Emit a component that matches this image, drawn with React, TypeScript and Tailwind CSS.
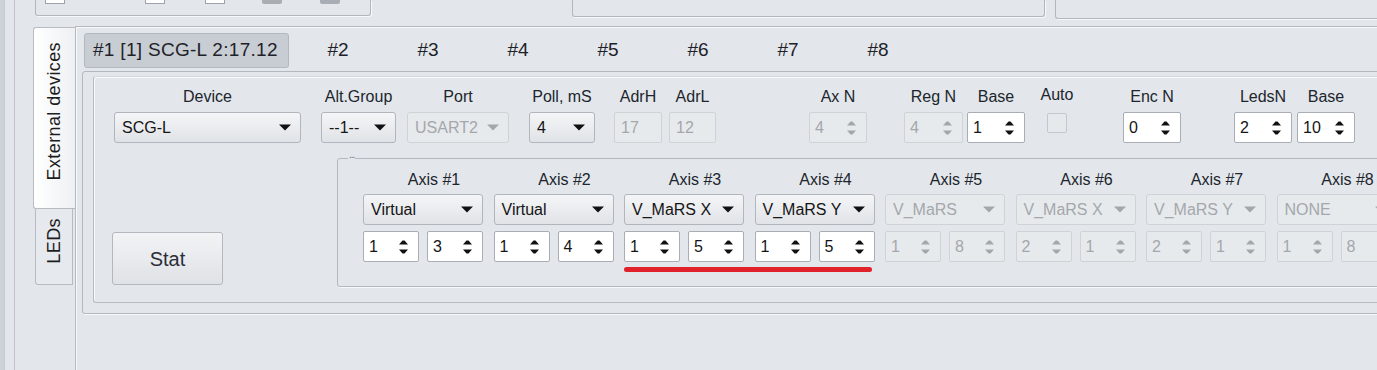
import React from 'react';

type Ctl = { className?: string; disabled?: boolean };

const ComboArrow = ({ disabled }: { disabled?: boolean }) => (
  <svg width="12" height="7" viewBox="0 0 12 7" className="shrink-0">
    <path d="M0 0.5 H12 L6 6.5 Z" fill={disabled ? '#a3a7ac' : '#111'} />
  </svg>
);

const SpinArrows = ({ disabled }: { disabled?: boolean }) => (
  <svg width="9" height="14" viewBox="0 0 9 14" className="shrink-0">
    <path d="M3.5 0.5 H5.5 L9 4.5 H0 Z M0 9.5 H9 L5.5 13.5 H3.5 Z" fill={disabled ? '#a3a7ac' : '#111'} />
  </svg>
);

const Combo = ({ text, className = '', disabled }: Ctl & { text: string }) => (
  <div
    className={`flex items-center justify-between pl-[7px] pr-[9px] rounded-[3px] border text-[16px] leading-none ${
      disabled
        ? 'border-[#cfd3d8] bg-[#e7eaed] text-[#a4a7ab]'
        : 'border-[#b1b6bd] bg-gradient-to-b from-[#f4f5f7] to-[#e0e3e7] text-[#151515]'
    } ${className}`}
  >
    <span className="whitespace-nowrap">{text}</span>
    <ComboArrow disabled={disabled} />
  </div>
);

const Spin = ({ value, className = '', disabled, arrows = true }: Ctl & { value: string; arrows?: boolean }) => (
  <div
    className={`flex items-center justify-between pl-[5px] pr-[10px] rounded-[2px] border text-[16px] leading-none ${
      disabled ? 'border-[#cfd3d8] bg-[#e7eaed] text-[#a4a7ab]' : 'border-[#a9aeb6] bg-white text-[#151515]'
    } ${className}`}
  >
    <span>{value}</span>
    {arrows && <SpinArrows disabled={disabled} />}
  </div>
);

const Field = ({ label, className = '', children, up }: { label: string; className?: string; children: React.ReactNode; up?: boolean }) => (
  <div className={`flex flex-col items-center shrink-0 ${className}`}>
    <div className={`h-[18px] leading-[18px] text-[16px] whitespace-nowrap text-[#20252d] ${up ? '-translate-y-[2px]' : ''}`}>{label}</div>
    <div className="mt-[6px]">{children}</div>
  </div>
);

const axes = [
  { combo: 'Virtual', a: '1', b: '3' },
  { combo: 'Virtual', a: '1', b: '4' },
  { combo: 'V_MaRS X', a: '1', b: '5' },
  { combo: 'V_MaRS Y', a: '1', b: '5' },
  { combo: 'V_MaRS', a: '1', b: '8', off: true },
  { combo: 'V_MaRS X', a: '2', b: '1', off: true },
  { combo: 'V_MaRS Y', a: '2', b: '1', off: true },
  { combo: 'NONE', a: '1', b: '8', off: true },
];

const tabs = ['#2', '#3', '#4', '#5', '#6', '#7', '#8'];

export default function App() {
  return (
    <div className="w-[1377px] h-[370px] overflow-hidden bg-[#e3e7eb] flex font-['Liberation_Sans',Arial,sans-serif] text-[#1b1b1b]">
      {/* window edge */}
      <div className="w-[15px] h-full shrink-0 flex border-r border-[#bfc4cb]">
        <div className="w-[5px] h-full bg-[#cdd2d8] border-r border-[#c4c9cf]" />
      </div>

      <div className="flex-1 flex flex-col min-w-0">
        {/* top strip: bottoms of the boxes above */}
        <div className="h-[26px] shrink-0 flex items-start">
          <div className="ml-[20px] w-[336px] h-[16px] shrink-0 border border-t-0 border-[#b2b7be] rounded-b-[3px] shadow-[1px_1px_0_#f7f8fa] flex items-start">
            <div className="ml-[9px] w-[20px] h-[4px] border border-t-0 border-[#9ea3aa] bg-white" />
            <div className="ml-[80px] w-[20px] h-[4px] border border-t-0 border-[#9ea3aa] bg-white" />
            <div className="ml-[40px] w-[20px] h-[4px] border border-t-0 border-[#9ea3aa] bg-white" />
            <div className="ml-[37px] w-[20px] h-[4px] rounded-b-[2px] bg-[#a9aeb5]" />
            <div className="ml-[38px] w-[20px] h-[4px] rounded-b-[2px] bg-[#a9aeb5]" />
          </div>
          <div className="ml-[201px] w-[473px] h-[17px] shrink-0 border border-t-0 border-[#b2b7be] rounded-b-[3px] shadow-[1px_1px_0_#f7f8fa]" />
          <div className="ml-[10px] w-[340px] h-[19px] shrink-0 border border-t-0 border-r-0 border-[#b2b7be] rounded-bl-[3px] shadow-[1px_1px_0_#f7f8fa]" />
        </div>

        <div className="flex-1 flex min-h-0">
          {/* vertical tabs */}
          <div className="w-[60px] shrink-0 flex flex-col items-end">
            <div className="mt-[1px] w-[42px] h-[182px] border border-r-0 border-[#b7bcc3] rounded-l-[3px] bg-gradient-to-r from-white to-[#eef0f3] flex items-center justify-center pb-[14px]">
              <span className="[writing-mode:vertical-rl] rotate-180 text-[18px] tracking-[0.4px] text-[#1d1d1d]">External devices</span>
            </div>
            <div className="w-[38px] h-[76px] mr-[2px] border border-t-0 border-[#b7bcc3] rounded-bl-[3px] bg-[#e6e9ed] flex items-center justify-center pb-[12px]">
              <span className="[writing-mode:vertical-rl] rotate-180 text-[18px] tracking-[0.4px] text-[#1d1d1d]">LEDs</span>
            </div>
          </div>

          {/* pane */}
          <div className="flex-1 min-w-0 border-l border-t border-[#b5bac1] shadow-[inset_1px_1px_0_#f8f9fb] pl-[6px] pt-[6px]">
            {/* device tabs */}
            <div className="h-[35px] flex items-start ml-[2px]">
              <div className="w-[205px] h-[35px] shrink-0 bg-[#c8cdd4] border border-[#b3b8bf] rounded-[3px] flex items-center pl-[8px] text-[19px] tracking-[0.3px] text-[#1e2228] whitespace-nowrap">
                #1 [1] SCG-L 2:17.12
              </div>
              <div className="ml-[4px] flex">
                {tabs.map((t) => (
                  <div key={t} className="w-[90px] h-[35px] shrink-0 flex items-center justify-center text-[19px] text-[#1e2228]">
                    {t}
                  </div>
                ))}
              </div>
            </div>

            {/* tab page */}
            <div className="mt-[3px] w-[1320px] h-[243px] border border-[#b3b8bf] rounded-[3px] shadow-[1px_1px_0_#f8f9fb] pl-[10px] pt-[4px]">
              <div className="h-[227px] border border-r-0 border-t-[#d4d8dd] border-l-[#b7bcc3] border-b-[#b7bcc3] rounded-l-[3px] shadow-[inset_1px_1px_0_#f8f9fb] pt-[11px]">
                {/* top controls */}
                <div className="flex items-start">
                  <Field label="Device" className="ml-[20px] w-[187px]">
                    <Combo text="SCG-L" className="w-[187px] h-[31px]" />
                  </Field>
                  <Field label="Alt.Group" className="ml-[20px] w-[75px]">
                    <Combo text="--1--" className="w-[75px] h-[31px]" />
                  </Field>
                  <Field label="Port" className="ml-[11px] w-[102px]">
                    <Combo text="USART2" className="w-[102px] h-[31px]" disabled />
                  </Field>
                  <Field label="Poll, mS" className="ml-[20px] w-[66px]">
                    <Combo text="4" className="w-[66px] h-[31px]" />
                  </Field>
                  <Field label="AdrH" className="ml-[19px] w-[48px]">
                    <Spin value="17" className="w-[48px] h-[31px] pl-[6px]" disabled arrows={false} />
                  </Field>
                  <Field label="AdrL" className="ml-[7px] w-[47px]">
                    <Spin value="12" className="w-[47px] h-[31px] pl-[6px]" disabled arrows={false} />
                  </Field>
                  <Field label="Ax N" className="ml-[93px] w-[58px]">
                    <Spin value="4" className="w-[58px] h-[31px]" disabled />
                  </Field>
                  <Field label="Reg N" className="ml-[37px] w-[59px]">
                    <Spin value="4" className="w-[59px] h-[31px]" disabled />
                  </Field>
                  <Field label="Base" className="ml-[4px] w-[58px]">
                    <Spin value="1" className="w-[58px] h-[31px]" />
                  </Field>
                  <Field label="Auto" className="ml-[22px] w-[20px]" up>
                    <div className="mt-[1px] w-[20px] h-[20px] border border-[#c3c8ce] rounded-[2px] bg-[#e6e9ec]" />
                  </Field>
                  <Field label="Enc N" className="ml-[56px] w-[58px]">
                    <Spin value="0" className="w-[58px] h-[31px]" />
                  </Field>
                  <Field label="LedsN" className="ml-[53px] w-[58px]">
                    <Spin value="2" className="w-[58px] h-[31px]" />
                  </Field>
                  <Field label="Base" className="ml-[5px] w-[58px]">
                    <Spin value="10" className="w-[58px] h-[31px]" />
                  </Field>
                </div>

                {/* stat + axis group */}
                <div className="mt-[15px] flex items-start">
                  <button className="ml-[18px] mt-[74px] w-[111px] h-[53px] shrink-0 border border-[#b3b8bf] rounded-[3px] bg-gradient-to-b from-[#f2f3f5] to-[#dfe2e6] text-[20px] text-[#2a2f38]">
                    Stat
                  </button>

                  <div className="relative ml-[114px] w-[1100px] h-[129px] shrink-0 border border-[#b3b8bf] rounded-[3px] shadow-[1px_1px_0_#f8f9fb] pl-[25px] pt-[12px]">
                    <span className="absolute -top-[9px] left-[10px] px-[1px] bg-[#e3e7eb] text-[10px] leading-[10px] tracking-[-1px] text-[#6b7078]">...</span>
                    <div className="flex gap-x-[10.5px]">
                      {axes.map((ax, i) => (
                        <div key={i} className="w-[120px] shrink-0 flex flex-col items-center">
                          <div className="h-[18px] leading-[18px] text-[16px] whitespace-nowrap text-[#20252d] pl-[22px]">Axis #{i + 1}</div>
                          <Combo text={ax.combo} className="mt-[5px] w-[120px] h-[31px]" disabled={ax.off} />
                          <div className="mt-[6px] w-full flex justify-between">
                            <Spin value={ax.a} className="w-[56px] h-[31px]" disabled={ax.off} />
                            <Spin value={ax.b} className="w-[56px] h-[31px]" disabled={ax.off} />
                          </div>
                        </div>
                      ))}
                    </div>
                    {/* red underline annotation */}
                    <div className="absolute left-[286px] top-[108px] w-[248px] h-[5px] rounded-full bg-[#e2222a]" />
                  </div>
                </div>
              </div>
            </div>
          </div>
        </div>
      </div>
    </div>
  );
}
